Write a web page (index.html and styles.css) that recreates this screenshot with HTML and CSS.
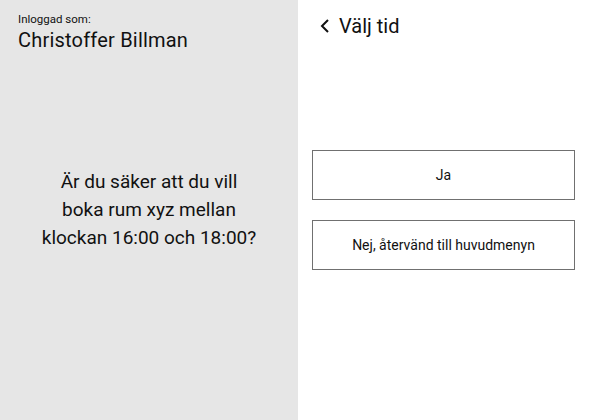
FILE: index.html
```html
<!DOCTYPE html>
<html lang="sv">
<head>
<meta charset="utf-8">
<title>Bekräfta bokning</title>
<link rel="stylesheet" href="styles.css">
</head>
<body>
<div class="screen">
  <aside class="left">
    <div class="user">
      <div class="user-label">Inloggad som:</div>
      <div class="user-name">Christoffer Billman</div>
    </div>
    <p class="question">Är du säker att du vill<br>boka rum xyz mellan<br>klockan 16:00 och 18:00?</p>
  </aside>
  <main class="right">
    <div class="back">
      <svg class="chev" width="12" height="16" viewBox="0 0 12 16"><polyline points="9,2 3,8 9,14" fill="none" stroke="#111" stroke-width="2"/></svg>
      <span>Välj tid</span>
    </div>
    <div class="actions">
      <button class="btn">Ja</button>
      <button class="btn">Nej, återvänd till huvudmenyn</button>
    </div>
  </main>
</div>
</body>
</html>
```
FILE: styles.css
```css
html, body {
  margin: 0;
  padding: 0;
  background: #fff;
}
body {
  font-family: Roboto, "DejaVu Sans", sans-serif;
  color: #111;
}
.screen {
  display: flex;
  width: 595px;
  height: 420px;
}
.left {
  width: 298px;
  flex: none;
  background: #e6e6e6;
  position: relative;
  display: flex;
  align-items: center;
  justify-content: center;
}
.user {
  position: absolute;
  left: 18px;
  top: 12px;
}
.user-label {
  font-size: 11.5px;
  line-height: 14px;
}
.user-name {
  font-size: 20px;
  line-height: 26px;
  letter-spacing: 0.2px;
  margin-top: 1px;
}
.question {
  margin: 0;
  text-align: center;
  font-size: 19px;
  line-height: 28px;
}
.right {
  flex: 1;
  position: relative;
  display: flex;
  flex-direction: column;
  justify-content: center;
  padding-left: 14px;
  padding-right: 20px;
}
.back {
  position: absolute;
  left: 21px;
  top: 14px;
  display: flex;
  align-items: center;
  gap: 8px;
  font-size: 20px;
  line-height: 24px;
}
.chev {
  display: block;
}
.actions {
  display: flex;
  flex-direction: column;
  gap: 20px;
}
.btn {
  height: 50px;
  width: 263px;
  background: #fff;
  border: 1.5px solid #707070;
  font-family: inherit;
  font-size: 14px;
  color: #111;
  padding: 0;
}
```
